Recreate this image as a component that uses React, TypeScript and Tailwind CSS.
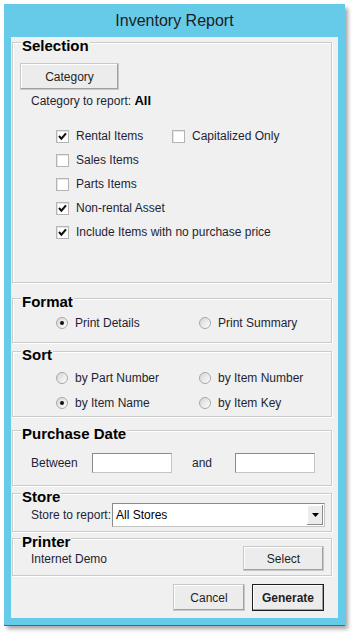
import React from "react";

const font = { fontFamily: '"Liberation Sans", Arial, sans-serif' };

const CheckBox = ({ checked, label }: { checked?: boolean; label: string }) => (
  <div className="flex h-[24px] items-center gap-[7px]">
    <span className="flex h-[13px] w-[13px] items-center justify-center border border-[#b4b4b4] bg-white shadow-[inset_1px_1px_0_#e6e6e6]">
      {checked && (
        <svg width="9" height="9" viewBox="0 0 9 9">
          <path d="M1 4 L3.4 6.6 L8 1.4" fill="none" stroke="#111" strokeWidth="2.1" />
        </svg>
      )}
    </span>
    <span className="text-[12px] text-[#1f1f33]">{label}</span>
  </div>
);

const Radio = ({ checked, label }: { checked?: boolean; label: string }) => (
  <div className="flex items-center gap-[7px]">
    <span className="flex h-[12px] w-[12px] items-center justify-center rounded-full border border-[#a8a8a8] bg-gradient-to-br from-[#d4d4d4] to-white">
      {checked && <span className="h-[4px] w-[4px] rounded-full bg-[#111]" />}
    </span>
    <span className="text-[12px] text-[#1f1f33]">{label}</span>
  </div>
);

const WinButton = ({ label, isDefault, className }: { label: string; isDefault?: boolean; className: string }) => (
  <button
    className={`flex items-center justify-center bg-[#ececec] text-[12px] text-[#1f1f1f] shadow-[inset_-1px_-1px_0_#a0a0a0,inset_1px_1px_0_#ffffff] ${
      isDefault ? "border border-[#1f1f1f] font-bold" : "border border-[#c8c8c8]"
    } ${className}`}
  >
    {label}
  </button>
);

const GroupBox = ({ title, className, children }: { title: string; className: string; children?: React.ReactNode }) => (
  <div className={`flex flex-col border border-[#cbcbcb] shadow-[inset_1px_1px_0_#fff,1px_1px_0_#fff] ${className}`}>
    <div className="-mt-[6px] ml-[8px] w-fit bg-[#f0f0f0] px-[1px] text-[15px] font-bold leading-[17px] text-black">
      {title}
    </div>
    {children}
  </div>
);

const TextBox = () => (
  <div className="h-[20px] w-[80px] border border-[#c4c4c4] border-l-[#8a8a8a] border-t-[#8a8a8a] bg-white" />
);

export default function App() {
  return (
    <div className="min-h-screen bg-white pl-[4px] pt-[4px]" style={font}>
      <div className="flex h-[621px] w-[341px] flex-col bg-[#66cbe9] shadow-[0_1px_0_#3f6f80,3px_4px_4px_rgba(0,0,0,0.35)]">
        <div className="flex h-[33px] items-center justify-center text-[16px] text-[#1c1c1c]">Inventory Report</div>

        <div className="mx-[7px] mb-[7px] flex flex-1 flex-col bg-[#f0f0f0] pl-px pr-[6px]">
          {/* Selection */}
          <GroupBox title="Selection" className="mt-[5px] h-[241px]">
            <WinButton label="Category" className="ml-[7px] mt-[9px] h-[27px] w-[99px]" />
            <div className="ml-[18px] mt-[4px] text-[12px] leading-[14px] text-[#1f1f33]">
              Category to report: <span className="text-[13px] font-bold text-black">All</span>
            </div>
            <div className="ml-[43px] mt-[16px] flex">
              <div className="flex w-[116px] flex-col">
                <CheckBox checked label="Rental Items" />
                <CheckBox label="Sales Items" />
                <CheckBox label="Parts Items" />
                <CheckBox checked label="Non-rental Asset" />
              </div>
              <CheckBox label="Capitalized Only" />
            </div>
            <div className="ml-[43px]">
              <CheckBox checked label="Include Items with no purchase price" />
            </div>
          </GroupBox>

          {/* Format */}
          <GroupBox title="Format" className="mt-[15px] h-[45px]">
            <div className="ml-[43px] mt-[3px] grid h-[20px] grid-cols-[143px_1fr] items-center">
              <Radio checked label="Print Details" />
              <Radio label="Print Summary" />
            </div>
          </GroupBox>

          {/* Sort */}
          <GroupBox title="Sort" className="mt-[8px] h-[66px]">
            <div className="ml-[43px] mt-[2px] grid grid-cols-[143px_1fr] grid-rows-[25px_25px] items-center">
              <Radio label="by Part Number" />
              <Radio label="by Item Number" />
              <Radio checked label="by Item Name" />
              <Radio label="by Item Key" />
            </div>
          </GroupBox>

          {/* Purchase Date */}
          <GroupBox title="Purchase Date" className="mt-[13px] h-[56px]">
            <div className="ml-[18px] mt-[11px] flex items-center text-[12px] text-[#1f1f33]">
              <span className="w-[61px]">Between</span>
              <TextBox />
              <span className="ml-[20px] w-[43px]">and</span>
              <TextBox />
            </div>
          </GroupBox>

          {/* Store */}
          <GroupBox title="Store" className="mt-[7px] h-[39px]">
            <div className="ml-[18px] -mt-[2px] flex items-center text-[12px] text-[#1f1f33]">
              <span className="w-[81px] whitespace-nowrap">Store to report:</span>
              <div className="flex h-[24px] w-[213px] items-center border border-[#c4c4c4] border-l-[#8a8a8a] border-t-[#8a8a8a] bg-white pl-[3px]">
                <span className="flex-1 text-[12px] text-black">All Stores</span>
                <span className="mr-px flex h-[20px] w-[16px] items-center justify-center bg-[#ececec] shadow-[inset_-1px_-1px_0_#8a8a8a,inset_1px_1px_0_#fff]">
                  <svg width="7" height="4" viewBox="0 0 7 4">
                    <path d="M0 0 H7 L3.5 4 Z" fill="#000" />
                  </svg>
                </span>
              </div>
            </div>
          </GroupBox>

          {/* Printer */}
          <GroupBox title="Printer" className="mt-[6px] h-[38px]">
            <div className="-mt-[4px] ml-[18px] flex items-center justify-between pr-[7px]">
              <span className="text-[12px] text-[#1f1f33]">Internet Demo</span>
              <WinButton label="Select" className="h-[25px] w-[81px]" />
            </div>
          </GroupBox>

          <div className="mt-[8px] flex justify-end gap-[7px] pr-[8px]">
            <WinButton label="Cancel" className="h-[27px] w-[72px]" />
            <WinButton label="Generate" isDefault className="h-[27px] w-[72px]" />
          </div>
        </div>
      </div>
    </div>
  );
}
